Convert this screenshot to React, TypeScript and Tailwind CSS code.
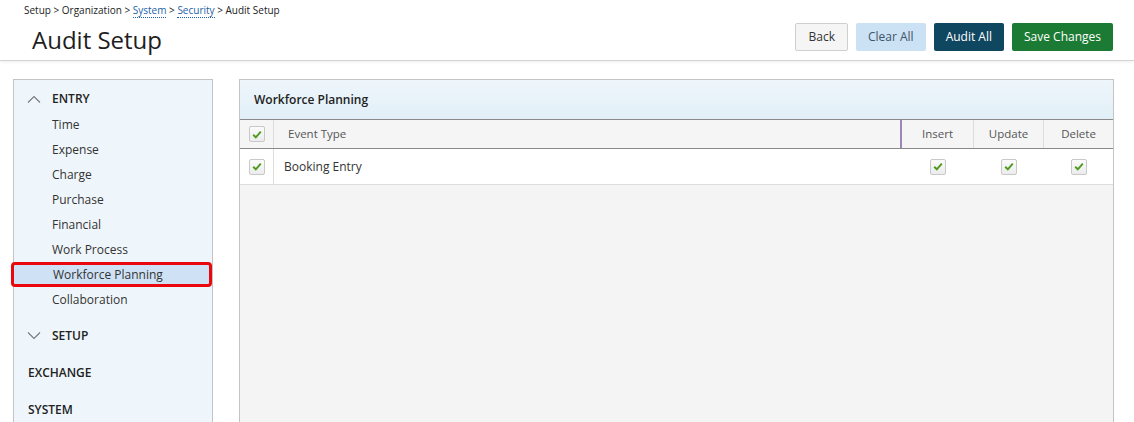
import React from "react";

const entryItems = [
  "Time",
  "Expense",
  "Charge",
  "Purchase",
  "Financial",
  "Work Process",
  "Workforce Planning",
  "Collaboration",
];

function Check() {
  return (
    <span className="inline-flex w-[16px] h-[16px] items-center justify-center rounded-[2px] border border-[#c8c8c8] bg-gradient-to-b from-[#fbfbfb] to-[#ececec]">
      <svg width="10" height="9" viewBox="0 0 10 9">
        <path d="M1.2 4.8 L3.8 7.3 L8.8 1.6" fill="none" stroke="#4e9a1e" strokeWidth="1.9" />
      </svg>
    </span>
  );
}

function Chevron({ up }: { up?: boolean }) {
  return (
    <svg width="14" height="8" viewBox="0 0 14 8" className="mr-[11px]">
      <path
        d={up ? "M1 7.5 L7 1.5 L13 7.5" : "M1 0.5 L7 6.5 L13 0.5"}
        fill="none"
        stroke="#777"
        strokeWidth="1.1"
      />
    </svg>
  );
}

export default function App() {
  return (
    <div className="w-[1134px] h-[422px] overflow-hidden bg-white text-[#222] font-['Open_Sans',sans-serif]">
      <header className="h-[61px] flex justify-between border-b border-[#d4d4d4] shadow-[0_1px_3px_rgba(0,0,0,0.08)]">
        <div className="pl-[24px] pt-[2px]">
          <div className="text-[10px] leading-[16px] text-[#222]">
            Setup &gt; Organization &gt;{" "}
            <span className="text-[#1d5fa8] border-b border-dotted border-[#1d5fa8]">System</span> &gt;{" "}
            <span className="text-[#1d5fa8] border-b border-dotted border-[#1d5fa8]">Security</span> &gt; Audit Setup
          </div>
          <div className="pl-[8px] mt-[7px] text-[24px] leading-[30px] text-[#1e1e1e]">Audit Setup</div>
        </div>
        <div className="flex gap-[8px] pt-[23px] pr-[21px] text-[12px]">
          <button className="h-[28px] px-[12px] rounded-[2px] border border-[#cfcfcf] bg-[#f5f5f5] text-[#333]">Back</button>
          <button className="h-[28px] px-[12px] rounded-[2px] bg-[#cbe1f4] text-[#3f5566]">Clear All</button>
          <button className="h-[28px] px-[12px] rounded-[2px] bg-[#0f4660] text-white">Audit All</button>
          <button className="h-[28px] px-[12px] rounded-[2px] bg-[#1b7a33] text-white">Save Changes</button>
        </div>
      </header>

      <div className="flex pt-[18px] gap-[26px]">
        <aside className="ml-[13px] w-[200px] h-[360px] border border-[#c4c4c4] bg-[#eff6fb] pt-[9px] text-[12px]">
          <div className="flex items-center h-[20px] pl-[13px] font-semibold text-[12px] text-[#222]">
            <Chevron up />
            ENTRY
          </div>
          <div className="mt-[3px]">
            {entryItems.map((item) =>
              item === "Workforce Planning" ? (
                <div
                  key={item}
                  className="-ml-[3px] h-[25px] flex items-center pl-[39px] bg-[#cfe2f5] border-[3px] border-[#e8080e] rounded-[4px] text-[#333]"
                >
                  {item}
                </div>
              ) : (
                <div key={item} className="h-[25px] flex items-center pl-[38px] text-[#333]">
                  {item}
                </div>
              )
            )}
          </div>
          <div className="flex items-center h-[20px] mt-[14px] pl-[13px] font-semibold text-[12px]">
            <Chevron />
            SETUP
          </div>
          <div className="flex items-center h-[20px] mt-[17px] pl-[14px] font-semibold text-[12px]">EXCHANGE</div>
          <div className="flex items-center h-[20px] mt-[17px] pl-[14px] font-semibold text-[12px]">SYSTEM</div>
        </aside>

        <main className="w-[875px] h-[360px] border border-[#c4c4c4] bg-[#f4f4f4]">
          <div className="h-[39px] flex items-center pl-[14px] bg-gradient-to-b from-[#eef6fb] to-[#e2eff8] text-[12px] font-semibold text-[#222]">
            Workforce Planning
          </div>
          <div className="flex h-[30px] items-stretch border-t border-b border-[#8a8a8a] bg-[#f5f5f5] text-[11.5px] text-[#555]">
            <div className="w-[34px] flex items-center justify-center border-r border-[#ddd]">
              <Check />
            </div>
            <div className="flex-1 flex items-center pl-[14px] relative">
              Event Type
              <span className="absolute right-0 top-0 bottom-0 w-[2px] bg-[#9c86b8]" />
            </div>
            <div className="w-[72px] flex items-center justify-center border-r border-[#ddd]">Insert</div>
            <div className="w-[70px] flex items-center justify-center border-r border-[#ddd]">Update</div>
            <div className="w-[69px] flex items-center justify-center">Delete</div>
          </div>
          <div className="flex h-[36px] items-stretch border-b border-[#ddd] bg-white text-[12px] text-[#333]">
            <div className="w-[34px] flex items-center justify-center border-r border-[#ddd]">
              <Check />
            </div>
            <div className="flex-1 flex items-center pl-[10px]">Booking Entry</div>
            <div className="w-[72px] flex items-center justify-center">
              <Check />
            </div>
            <div className="w-[70px] flex items-center justify-center">
              <Check />
            </div>
            <div className="w-[69px] flex items-center justify-center">
              <Check />
            </div>
          </div>
        </main>
      </div>
    </div>
  );
}
